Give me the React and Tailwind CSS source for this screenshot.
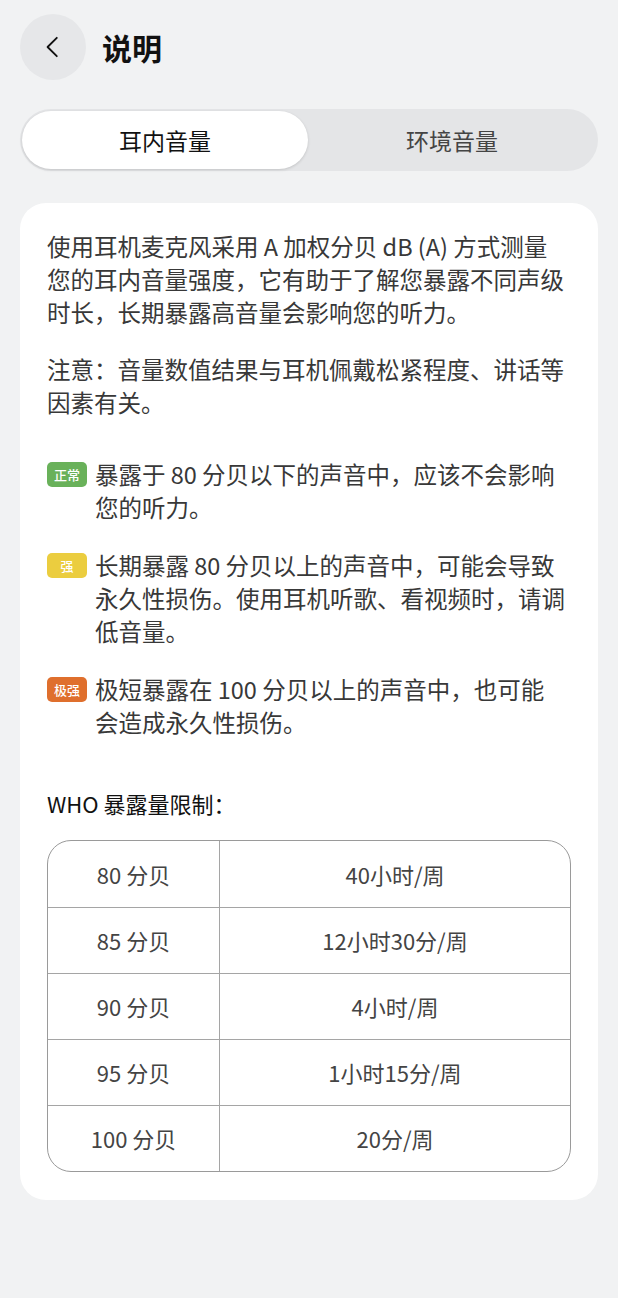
import { useState } from 'react'

const levels = [
  { tag: '正常', color: 'bg-[#69b15a]', lines: ['暴露于 80 分贝以下的声音中，应该不会影响', '您的听力。'] },
  { tag: '强', color: 'bg-[#ebcd3f]', lines: ['长期暴露 80 分贝以上的声音中，可能会导致', '永久性损伤。使用耳机听歌、看视频时，请调', '低音量。'] },
  { tag: '极强', color: 'bg-[#df6f2d]', lines: ['极短暴露在 100 分贝以上的声音中，也可能', '会造成永久性损伤。'] },
]

const limits = [
  ['80 分贝', '40小时/周'],
  ['85 分贝', '12小时30分/周'],
  ['90 分贝', '4小时/周'],
  ['95 分贝', '1小时15分/周'],
  ['100 分贝', '20分/周'],
]

function Lines({ lines }) {
  return lines.map((l, i) => (
    <span key={i} className="block whitespace-nowrap">{l}</span>
  ))
}

export default function App() {
  const [tab, setTab] = useState(0)

  return (
    <div className="min-h-[1298px] bg-[#f1f2f3] px-5 pt-[14px] pb-10 font-['Noto_Sans_CJK_SC','Noto_Sans',sans-serif] text-[#383838]">
      {/* header */}
      <div className="flex items-center gap-4 h-[66px]">
        <button className="w-[66px] h-[66px] rounded-full bg-[#e6e7e9] flex items-center justify-center">
          <svg width="26" height="26" viewBox="0 0 24 24" fill="none" stroke="#111" strokeWidth="1.7" strokeLinecap="round" strokeLinejoin="round">
            <path d="M15.5 3.5 7 12l8.5 8.5" />
          </svg>
        </button>
        <h1 className="text-[30px] font-bold text-[#111] leading-none">说明</h1>
      </div>

      {/* tabs */}
      <div className="mt-[29px] h-[62px] rounded-full bg-[#e4e5e7] p-[2px] flex">
        {['耳内音量', '环境音量'].map((t, i) => (
          <button
            key={t}
            onClick={() => setTab(i)}
            className={
              i === tab
                ? 'w-[286px] rounded-full bg-white shadow-[0_1px_3px_rgba(0,0,0,0.15)] text-[23px] text-[#111]'
                : 'flex-1 rounded-full text-[23px] text-[#444]'
            }
          >
            {t}
          </button>
        ))}
      </div>

      {/* card */}
      <div className="mt-8 rounded-[26px] bg-white px-[27px] pt-[27px] pb-[28px] text-[23.5px] leading-[33px]">
        <p>
          <Lines lines={['使用耳机麦克风采用 A 加权分贝 dB (A) 方式测量', '您的耳内音量强度，它有助于了解您暴露不同声级', '时长，长期暴露高音量会影响您的听力。']} />
        </p>
        <p className="mt-6">
          <Lines lines={['注意：音量数值结果与耳机佩戴松紧程度、讲话等', '因素有关。']} />
        </p>

        <div className="mt-[39px] flex flex-col gap-[25px]">
          {levels.map((lv) => (
            <div key={lv.tag} className="flex gap-2">
              <div className="h-[33px] flex items-center shrink-0">
                <span className={`w-10 h-[25px] rounded-[5px] ${lv.color} text-white text-[13px] font-medium leading-none flex items-center justify-center`}>
                  {lv.tag}
                </span>
              </div>
              <p><Lines lines={lv.lines} /></p>
            </div>
          ))}
        </div>

        <p className="mt-[48px] text-[#111] text-[22px]">WHO 暴露量限制：</p>

        <div className="mt-[20px] border border-[#9a9a9a] rounded-[24px] overflow-hidden text-[22px] text-[#444]">
          {limits.map(([db, time], i) => (
            <div key={db} className={`flex h-[66px] ${i > 0 ? 'border-t border-[#a5a5a5]' : ''}`}>
              <div className="w-[172px] border-r border-[#a5a5a5] flex items-center justify-center">{db}</div>
              <div className="flex-1 flex items-center justify-center">{time}</div>
            </div>
          ))}
        </div>
      </div>
    </div>
  )
}
